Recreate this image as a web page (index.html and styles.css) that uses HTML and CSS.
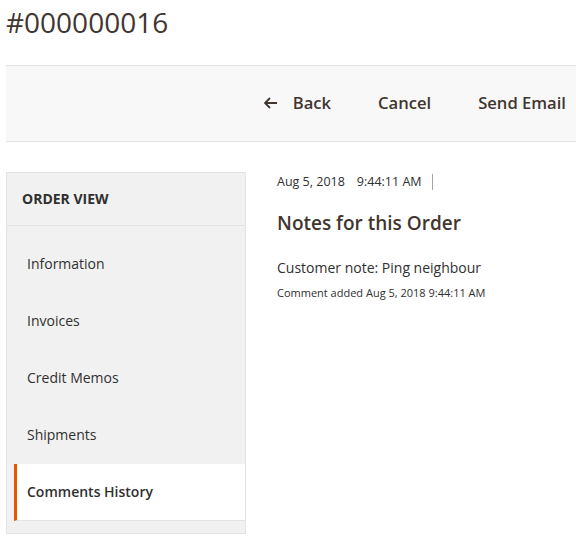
FILE: index.html
```html
<!DOCTYPE html>
<html>
<head>
<meta charset="utf-8">
<link rel="stylesheet" href="styles.css">
</head>
<body>
<div class="page">
  <h1 class="title">#000000016</h1>
  <div class="toolbar">
    <button class="tbtn back"><svg class="arrow" width="14" height="12" viewBox="0 0 14 12"><path d="M6 1 L1 6 L6 11 M1 6 H13" fill="none" stroke="#41362f" stroke-width="1.8"/></svg><span>Back</span></button>
    <button class="tbtn">Cancel</button>
    <button class="tbtn">Send Email</button>
  </div>
  <div class="main">
    <div class="sidebar">
      <div class="side-head">ORDER VIEW</div>
      <ul class="side-list">
        <li class="side-item">Information</li>
        <li class="side-item">Invoices</li>
        <li class="side-item">Credit Memos</li>
        <li class="side-item">Shipments</li>
        <li class="side-item active">Comments History</li>
      </ul>
    </div>
    <div class="content">
      <div class="date"><span>Aug 5, 2018</span><span class="time">9:44:11 AM</span><span class="sep"></span></div>
      <h2 class="heading">Notes for this Order</h2>
      <div class="note">Customer note: Ping neighbour</div>
      <div class="added">Comment added Aug 5, 2018 9:44:11 AM</div>
    </div>
  </div>
</div>
</body>
</html>
```
FILE: styles.css
```css
* { box-sizing: border-box; }
body { margin: 0; font-family: "Open Sans", sans-serif; color: #41362f; background: #fff; }
.page { padding-left: 6px; }
.title { margin: 0; font-size: 28px; font-weight: 400; line-height: 44px; height: 65px; color: #41362f; }
.toolbar { height: 77px; background: #f8f8f8; border-top: 1px solid #e3e3e3; border-bottom: 1px solid #e3e3e3; display: flex; justify-content: flex-end; align-items: center; padding-right: 10px; padding-bottom: 2px; }
.tbtn { background: none; border: 0; font-family: "Open Sans", sans-serif; font-weight: 600; font-size: 16.6px; color: #41362f; padding: 0; margin-left: 47px; display: flex; align-items: center; }
.tbtn.back { margin-left: 0; }
.arrow { margin-right: 15px; }
.main { display: flex; padding-top: 30px; }
.sidebar { width: 240px; background: #f1f1f1; border: 1px solid #e3e3e3; padding-bottom: 12px; }
.side-head { height: 53px; line-height: 52px; padding-left: 15px; font-weight: 700; font-size: 14px; color: #303030; border-bottom: 1px solid #e3e3e3; }
.side-list { list-style: none; margin: 10px 0 0 7px; padding: 0; }
.side-item { height: 57px; line-height: 55px; padding-left: 10px; font-size: 14px; color: #303030; border-left: 3px solid transparent; }
.side-item.active { background: #fff; border-left-color: #eb5202; font-weight: 600; border-bottom: 1px solid #e3e3e3; }
.content { padding-left: 31px; }
.date { font-size: 12.5px; line-height: 18px; color: #303030; display: flex; align-items: center; padding-top: 1px; }
.time { margin-left: 12px; }
.sep { display: inline-block; width: 1px; height: 16px; background: #a6a6a6; margin-left: 10px; }
.heading { margin: 18px 0 0; font-size: 19px; font-weight: 600; line-height: 28px; color: #41362f; }
.note { margin-top: 21px; font-size: 14px; line-height: 20px; color: #303030; }
.added { margin-top: 7px; font-size: 11px; line-height: 16px; color: #303030; }
```
